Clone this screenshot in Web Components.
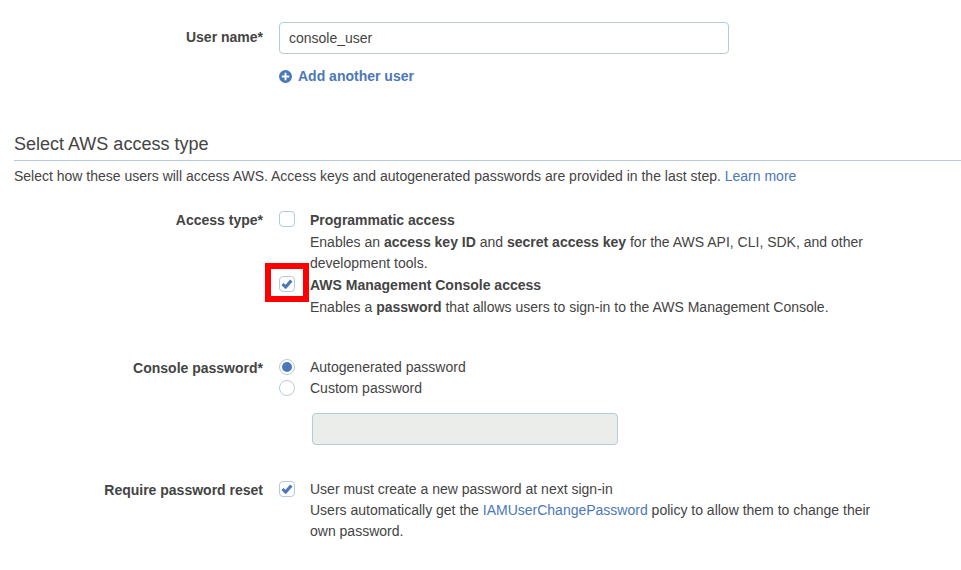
<!DOCTYPE html>
<html lang="en">
<head>
<meta charset="utf-8">
<meta name="viewport" content="width=device-width, initial-scale=1">
<title>Add user</title>
<style>
  body { margin: 0; background: #fff; }
</style>
</head>
<body>
<add-user-form></add-user-form>

<template id="form-row">
  <style>
    :host { display: grid; grid-template-columns: 249px minmax(0, 600px); column-gap: 16px; align-items: start; }
    .label { text-align: right; font-weight: bold; }
    .fields { display: flex; flex-direction: column; min-width: 0; }
  </style>
  <div class="label"><slot name="label"></slot></div>
  <div class="fields"><slot></slot></div>
</template>

<template id="choice-option">
  <style>
    :host { display: grid; grid-template-columns: 16px minmax(0, 1fr); column-gap: 15px; align-items: start; }
    .control { display: flex; padding-top: var(--control-top, 2px); }
    .text { display: flex; flex-direction: column; gap: var(--choice-gap, 0px); }
  </style>
  <div class="control"><slot name="control"></slot></div>
  <div class="text"><slot></slot></div>
</template>

<template id="highlight-frame">
  <style>
    :host { display: block; position: relative; }
    .frame { position: absolute; inset: -13px -14px -10px; border: 6px solid #fe0000; pointer-events: none; }
  </style>
  <slot></slot>
  <div class="frame"></div>
</template>

<template id="section-heading">
  <style>
    :host { display: block; border-bottom: 1px solid #b8c9d9; padding-bottom: 4px; }
    h2 { margin: 0; font-size: 18px; line-height: 24px; font-weight: normal; }
  </style>
  <h2><slot></slot></h2>
</template>

<template id="add-user-form">
  <style>
    :host { display: block; padding: 22px 0 24px 14px; color: #444; font: 14px/21px "Liberation Sans", Arial, sans-serif; }
    * { box-sizing: border-box; }
    p { margin: 0; }
    a { color: #4c78b8; text-decoration: none; }
    input { margin: 0; font: inherit; color: inherit; border: 1px solid #b8c9d9; background: #fff; }
    input[type="text"], input[type="password"] { height: 32px; border-radius: 4px; padding: 0 9px; }
    #user-name { width: 75%; }
    #custom-password { width: 306px; max-width: 100%; margin: 14px 0 0 33px; background: #ebedea; }
    input[type="checkbox"], input[type="radio"] { appearance: none; display: grid; place-items: center; width: 16px; height: 16px; }
    input[type="checkbox"] { border-radius: 4px; }
    input[type="radio"] { border-radius: 50%; }
    input[type="radio"]:checked::before { content: ""; width: 10px; height: 10px; border-radius: 50%; background: #4c78b8; }
    input[type="checkbox"]:checked::before { content: ""; width: 12px; height: 12px; background: #4c78b8; clip-path: polygon(4% 58%, 20% 42%, 38% 56%, 76% 12%, 96% 30%, 44% 90%, 34% 90%); }
    .add { align-self: flex-start; display: flex; align-items: center; gap: 6px; margin-top: 12px; padding: 0; border: 0; background: none; color: #4c78b8; font: inherit; font-weight: bold; }
    .row-label { display: block; }
    .user .row-label { padding-top: 5px; }
    .password .row-label, .reset .row-label { padding-top: 1px; }
    .title { font-weight: bold; }
    .access { --choice-gap: 1px; --control-top: 1px; margin-top: 23px; }
    .access choice-option + choice-option { margin-top: 1px; }
    .password { margin-top: 39px; }
    .reset { margin-top: 34px; }
    section-heading { margin-top: 45px; }
    .intro { margin-top: 5px; }
  </style>
  <form-row class="user">
    <label slot="label" class="row-label" for="user-name">User name*</label>
    <input id="user-name" type="text" value="console_user">
    <button class="add" type="button">
      <svg width="13" height="13" viewBox="0 0 14 14" aria-hidden="true"><circle cx="7" cy="7" r="7" fill="#4c78b8"/><path d="M7 3v8M3 7h8" stroke="#fff" stroke-width="2"/></svg>
      <span>Add another user</span>
    </button>
  </form-row>

  <section-heading>Select AWS access type</section-heading>
  <p class="intro">Select how these users will access AWS. Access keys and autogenerated passwords are provided in the last step. <a href="#learn-more">Learn more</a></p>

  <form-row class="access" role="group" aria-labelledby="access-label">
    <span slot="label" class="row-label" id="access-label">Access type*</span>
    <choice-option>
      <input slot="control" type="checkbox" id="programmatic">
      <label class="title" for="programmatic">Programmatic access</label>
      <p>Enables an <b>access key ID</b> and <b>secret access key</b> for the AWS API, CLI, SDK, and other development tools.</p>
    </choice-option>
    <choice-option>
      <highlight-frame slot="control"><input type="checkbox" id="console" checked></highlight-frame>
      <label class="title" for="console">AWS Management Console access</label>
      <p>Enables a <b>password</b> that allows users to sign-in to the AWS Management Console.</p>
    </choice-option>
  </form-row>

  <form-row class="password" role="radiogroup" aria-labelledby="password-label">
    <span slot="label" class="row-label" id="password-label">Console password*</span>
    <choice-option>
      <input slot="control" type="radio" name="password-kind" id="autogenerated" checked>
      <label for="autogenerated">Autogenerated password</label>
    </choice-option>
    <choice-option>
      <input slot="control" type="radio" name="password-kind" id="custom">
      <label for="custom">Custom password</label>
    </choice-option>
    <input id="custom-password" type="password" aria-label="Custom password" disabled>
  </form-row>

  <form-row class="reset" role="group" aria-labelledby="reset-label">
    <span slot="label" class="row-label" id="reset-label">Require password reset</span>
    <choice-option>
      <input slot="control" type="checkbox" id="reset" checked>
      <label for="reset">User must create a new password at next sign-in</label>
      <p>Users automatically get the <a href="#policy">IAMUserChangePassword</a> policy to allow them to change their own password.</p>
    </choice-option>
  </form-row>
</template>

<script>
  const define = (name) => customElements.define(name, class extends HTMLElement {
    constructor() {
      super();
      this.attachShadow({ mode: "open" }).append(document.getElementById(name).content.cloneNode(true));
    }
  });
  ["form-row", "choice-option", "highlight-frame", "section-heading", "add-user-form"].forEach(define);
</script>
</body>
</html>
